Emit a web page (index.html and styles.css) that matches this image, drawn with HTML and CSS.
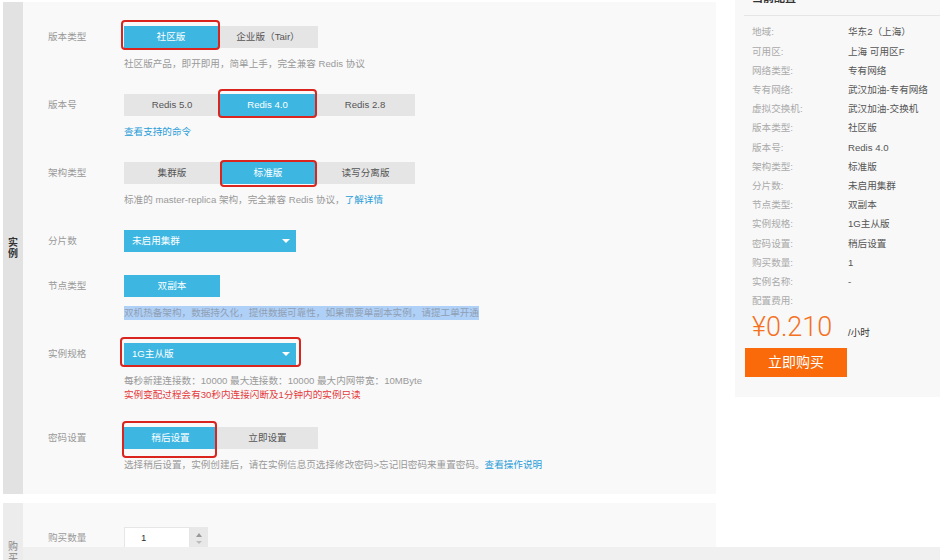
FILE: index.html
```html
<!DOCTYPE html>
<html lang="zh-CN">
<head>
<meta charset="utf-8">
<title>Redis 实例配置</title>
<link rel="stylesheet" href="styles.css">
</head>
<body>
<div class="page">
  <div class="main">
    <section class="sec">
      <div class="strip"><span>实<br>例</span></div>
      <div class="sec-body">
        <div class="group">
          <div class="label">版本类型</div>
          <div class="field">
            <div class="seg">
              <div class="btn on btn-94 mark mark-1">社区版</div>
              <div class="btn btn-100">企业版（Tair）</div>
            </div>
            <div class="hint">社区版产品，即开即用，简单上手，完全兼容 Redis 协议</div>
          </div>
        </div>
        <div class="group">
          <div class="label">版本号</div>
          <div class="field">
            <div class="seg">
              <div class="btn">Redis 5.0</div>
              <div class="btn on btn-95 mark mark-2">Redis 4.0</div>
              <div class="btn btn-100">Redis 2.8</div>
            </div>
            <div class="hint"><span class="link">查看支持的命令</span></div>
          </div>
        </div>
        <div class="group">
          <div class="label">架构类型</div>
          <div class="field">
            <div class="seg">
              <div class="btn">集群版</div>
              <div class="btn on mark mark-3">标准版</div>
              <div class="btn btn-99">读写分离版</div>
            </div>
            <div class="hint">标准的 master-replica 架构，完全兼容 Redis 协议，<span class="link">了解详情</span></div>
          </div>
        </div>
        <div class="group">
          <div class="label">分片数</div>
          <div class="field">
            <div class="select">未启用集群</div>
          </div>
        </div>
        <div class="group">
          <div class="label">节点类型</div>
          <div class="field">
            <div class="seg">
              <div class="btn on">双副本</div>
            </div>
            <div class="hint"><span class="selected">双机热备架构，数据持久化，提供数据可靠性，如果需要单副本实例，请提工单开通</span></div>
          </div>
        </div>
        <div class="group">
          <div class="label">实例规格</div>
          <div class="field">
            <div class="select mark mark-4">1G主从版</div>
            <div class="hint">每秒新建连接数：10000 最大连接数：10000 最大内网带宽：10MByte</div>
            <div class="warn">实例变配过程会有30秒内连接闪断及1分钟内的实例只读</div>
          </div>
        </div>
        <div class="group">
          <div class="label">密码设置</div>
          <div class="field">
            <div class="seg">
              <div class="btn on btn-93 mark mark-5">稍后设置</div>
              <div class="btn btn-101">立即设置</div>
            </div>
            <div class="hint">选择稍后设置，实例创建后，请在实例信息页选择修改密码&gt;忘记旧密码来重置密码。<span class="link">查看操作说明</span></div>
          </div>
        </div>
      </div>
    </section>
    <section class="sec sec-buy">
      <div class="strip strip-light"><span>购<br>买</span></div>
      <div class="sec-body">
        <div class="group">
          <div class="label">购买数量</div>
          <div class="field">
            <div class="num">
              <div class="num-input">1</div>
              <div class="num-spin">
                <span class="arr-up"></span>
                <span class="arr-down"></span>
              </div>
            </div>
          </div>
        </div>
      </div>
    </section>
  </div>
  <aside class="summary">
    <div class="summary-title">当前配置</div>
    <div class="kv">
      <div class="k">地域:</div><div class="v">华东2（上海）</div>
      <div class="k">可用区:</div><div class="v">上海 可用区F</div>
      <div class="k">网络类型:</div><div class="v">专有网络</div>
      <div class="k">专有网络:</div><div class="v">武汉加油-专有网络</div>
      <div class="k">虚拟交换机:</div><div class="v">武汉加油-交换机</div>
      <div class="k">版本类型:</div><div class="v">社区版</div>
      <div class="k">版本号:</div><div class="v">Redis 4.0</div>
      <div class="k">架构类型:</div><div class="v">标准版</div>
      <div class="k">分片数:</div><div class="v">未启用集群</div>
      <div class="k">节点类型:</div><div class="v">双副本</div>
      <div class="k">实例规格:</div><div class="v">1G主从版</div>
      <div class="k">密码设置:</div><div class="v">稍后设置</div>
      <div class="k">购买数量:</div><div class="v">1</div>
      <div class="k">实例名称:</div><div class="v">-</div>
      <div class="k">配置费用:</div><div class="v"></div>
    </div>
    <div class="price-row">
      <div class="price">¥0.210</div>
      <div class="unit">/小时</div>
    </div>
    <div class="buy-btn">立即购买</div>
  </aside>
</div>
<div class="footer-bar"></div>
</body>
</html>
```

FILE: styles.css
```css
html, body {
  margin: 0;
  padding: 0;
  background: #fff;
  overflow: hidden;
}
body {
  font-family: "Liberation Sans", "Noto Sans CJK SC", sans-serif;
  font-size: 9.6px;
  color: #666;
}
.page {
  display: flex;
  align-items: flex-start;
  padding-left: 3px;
  width: 940px;
}
.main {
  width: 713px;
  flex: none;
  padding-top: 2px;
  display: flex;
  flex-direction: column;
  gap: 9px;
}
.sec {
  display: flex;
  background: #f9f9f9;
}
.strip {
  width: 20px;
  flex: none;
  background: #e2e2e2;
  display: flex;
  align-items: center;
  justify-content: center;
  text-align: center;
  font-size: 10px;
  font-weight: bold;
  line-height: 11px;
  color: #333;
}
.strip-light {
  background: #ececec;
  color: #888;
  font-weight: normal;
}
.sec-body {
  flex: 1;
  padding: 24px 0 22px 25px;
  display: flex;
  flex-direction: column;
  gap: 23px;
}
.group {
  display: grid;
  grid-template-columns: 76px 1fr;
}
.label {
  line-height: 22px;
  color: #999;
}
.seg {
  display: flex;
}
.btn {
  width: 96px;
  height: 22px;
  line-height: 22px;
  text-align: center;
  background: #e5e5e5;
  color: #555;
  flex: none;
}
.btn.on {
  background: #3db7e2;
  color: #fff;
}
.btn-93 { width: 93px; }
.btn-94 { width: 94px; }
.btn-95 { width: 95px; }
.btn-99 { width: 99px; }
.btn-100 { width: 100px; }
.btn-101 { width: 101px; }
.hint {
  margin-top: 9px;
  line-height: 14px;
  color: #999;
}
.warn {
  line-height: 14px;
  padding-bottom: 2px;
  color: #e4393c;
}
.link {
  color: #2a9dd8;
}
.selected {
  display: inline-block;
  background: #afd0f7;
  color: #8f9fb3;
}
.select {
  position: relative;
  box-sizing: border-box;
  width: 172px;
  height: 22px;
  line-height: 22px;
  padding-left: 8px;
  background: #3db7e2;
  color: #fff;
}
.select::before {
  content: "";
  position: absolute;
  right: 6px;
  top: 9px;
  border-left: 4px solid transparent;
  border-right: 4px solid transparent;
  border-top: 4px solid #fff;
}
.mark {
  position: relative;
}
.mark::after {
  content: "";
  position: absolute;
  border: 2px solid #d9251d;
  border-radius: 4px;
  z-index: 2;
}
.mark-1::after { top: -6px; right: -2px; bottom: -2px; left: -3px; }
.mark-2::after { top: -5px; right: -2px; bottom: -2px; left: -2px; }
.mark-3::after { top: -2px; right: -1px; bottom: -3px; left: 0; }
.mark-4::after { top: -6px; right: -5px; bottom: -2px; left: -4px; }
.mark-5::after { top: -6px; right: 0; bottom: -9px; left: -2px; }

.sec-buy {
  height: 98px;
}
.num {
  display: flex;
  height: 22px;
}
.num-input {
  box-sizing: border-box;
  width: 66px;
  height: 22px;
  line-height: 20px;
  padding-left: 16px;
  background: #fff;
  border: 1px solid #e6e6e6;
  color: #333;
}
.num-spin {
  width: 18px;
  background: #e8e8e8;
  display: flex;
  flex-direction: column;
  align-items: center;
  justify-content: center;
  gap: 4px;
}
.arr-up {
  border-left: 3px solid transparent;
  border-right: 3px solid transparent;
  border-bottom: 4px solid #999;
}
.arr-down {
  border-left: 3px solid transparent;
  border-right: 3px solid transparent;
  border-top: 3px solid #bbb;
}

.summary {
  margin-left: 19px;
  width: 215px;
  flex: none;
  background: #f8f8f8;
  padding: 0 0 20px 9px;
}
.summary-title {
  margin-top: -8px;
  line-height: 12px;
  padding: 0 0 11px 8px;
  font-size: 11px;
  font-weight: bold;
  color: #333;
  border-bottom: 1px solid #e6e6e6;
}
.kv {
  display: grid;
  grid-template-columns: 96px 1fr;
  padding: 6.4px 0 0 8px;
  line-height: 19.2px;
}
.k {
  color: #aaa;
}
.v {
  color: #555;
}
.price-row {
  display: grid;
  grid-template-columns: 96px 1fr;
  align-items: baseline;
  padding: 2px 0 0 8px;
}
.price {
  font-family: Roboto, "Liberation Sans", sans-serif;
  font-weight: 300;
  font-size: 27px;
  line-height: 30px;
  color: #f4711f;
  white-space: nowrap;
}
.unit {
  color: #333;
}
.buy-btn {
  margin: 6px 0 0 1px;
  width: 102px;
  height: 29px;
  line-height: 29px;
  text-align: center;
  background: #fa6a0a;
  color: #fff;
  font-size: 14px;
}
.footer-bar {
  position: fixed;
  left: 23px;
  right: 0;
  bottom: 0;
  height: 13px;
  background: #f0f0f0;
}
```
